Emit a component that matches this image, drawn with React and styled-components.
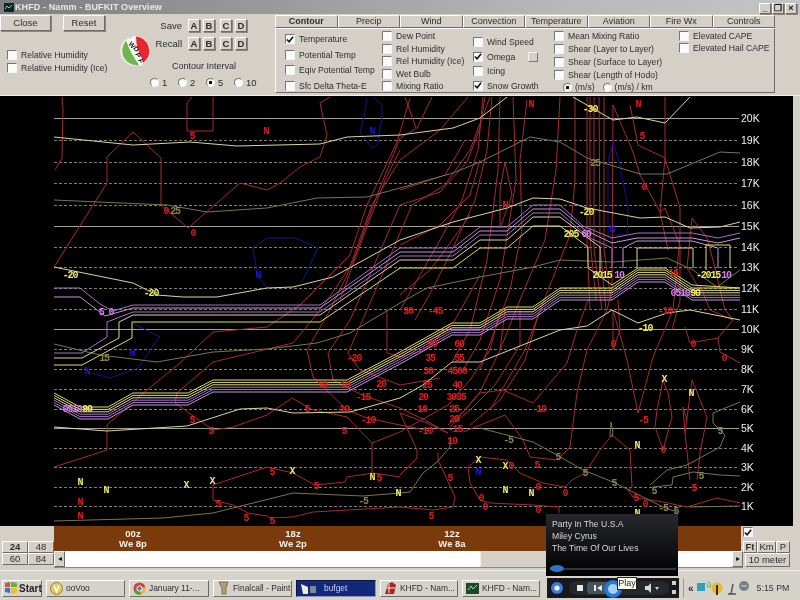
import React from 'react';
import styled, { createGlobalStyle, css } from 'styled-components';

const GlobalStyle = createGlobalStyle`
    html, body { margin: 0; padding: 0; background: #d4d0c8; }
    * { box-sizing: border-box; }
`;

const FACE = '#d4d0c8';
const raised = css`
    border: 1px solid;
    border-color: #fff #6e6c66 #6e6c66 #fff;
    box-shadow: 1px 1px 0 #8a8880;
`;

// chart data, all in page pixels (viewBox starts at y=96)
const GRID = [
    ['20K', 118, 1], ['19K', 140], ['18K', 162], ['17K', 183], ['16K', 205],
    ['15K', 226, 1], ['14K', 247], ['13K', 267], ['12K', 288], ['11K', 309],
    ['10K', 329, 1], ['9K', 349], ['8K', 369], ['7K', 389], ['6K', 409],
    ['5K', 428, 1], ['4K', 448], ['3K', 467], ['2K', 487], ['1K', 506],
];

const PALE = '#d8d89a';
const OLIVE = '#77774a';
const YEL = '#e0dc60';
const PUR = '#a870c8';
const LILAC = '#c498dc';
const RED = '#a62a30';
const BLUE = '#14148e';

const TEMP_LINES = [
    [PALE, '54,137 133,145 190,142 237,146 320,144 347,137 400,135 453,128 480,118 507,97'],
    [PALE, '573,97 613,120 637,117 665,123 690,97'],
    [OLIVE, '54,200 167,205 207,212 267,208 317,198 367,197 400,188 453,173 480,162 530,137 560,142 587,158 640,174 667,174 720,152 740,153'],
    [PALE, '54,267 133,283 157,295 183,297 217,297 267,288 293,287 333,277 400,240 453,222 507,208 533,198 560,199 587,208 640,218 665,217 690,228 720,227 740,222'],
    [OLIVE, '54,344 100,355 157,362 213,352 267,349 317,343 350,333 400,303 427,288 480,277 533,267 560,260 613,262 667,258 693,270 717,287 740,270'],
    [PALE, '54,427 107,431 187,426 240,409 267,408 293,413 350,412 400,398 423,385 452,362 480,362 510,350 560,330 587,326 612,310 638,323 667,313 690,310 740,320'],
    [OLIVE, '54,521 163,518 213,513 253,503 293,493 363,496 400,493 410,492 423,473 437,462 450,447 450,437'],
    [OLIVE, '480,428 533,442 557,455 583,470 613,482 633,492 663,507 677,512'],
    [OLIVE, '650,485 667,470 687,465 720,447 725,435 713,423 713,413 740,402'],
    [OLIVE, '653,487 672,485 673,477 693,472 720,475 740,476'],
    [OLIVE, '690,507 740,506'],
    [OLIVE, '610,437 611,422 613,432 612,437'],
];

const RED_LINES = [
    '62,97 63,108 62,158 55,170',
    '192,97 187,103 187,131 213,131 213,97',
    '54,267 107,183 107,157 133,132 161,158 161,205 188,228 240,183 267,190 280,183 300,167 320,157 327,135 320,103 330,97',
    '54,467 107,450 107,425 147,390 180,363 213,332 267,327 300,305 320,285 350,255 367,205 397,142 410,98',
    '213,362 177,393 175,403 213,430 233,427 267,415 292,398 313,410 347,417 372,443 400,432 448,405 470,380 490,350 500,310',
    '213,362 293,343 320,310 333,292 353,262 377,195 400,138 417,128 432,97',
    '307,350 330,310 347,275 372,205 400,160 440,130 468,97',
    '307,350 313,377 347,410 367,418 400,425 430,431',
    '328,353 333,380 362,395 400,408 425,420 448,433',
    '328,353 350,320 372,270 400,205 440,192 467,162 480,128 485,97',
    '348,353 360,370 400,385 440,378',
    '348,353 367,310 385,268 412,205 445,185 470,150 490,97',
    '387,310 387,353 400,357 425,350 455,320 480,275',
    '340,300 362,240 385,180 400,150',
    '372,443 372,473',
    '213,485 267,467 293,473 315,485 345,482 347,477 373,473 400,477',
    '213,485 213,500 233,505 248,513 267,516 270,518 293,517 313,512 400,507 433,510 453,507 455,497 438,460 438,452',
    '400,413 417,450 417,458 400,475',
    '468,467 480,457 507,460 520,473 543,483 565,487 572,480 585,473 600,450 612,435 630,450 632,487 628,490 633,497 663,502 687,507 717,498 740,503',
    '468,467 470,483 480,500 490,503 533,505 559,507 559,513',
    '400,413 427,423 448,433',
    '463,432 505,415 523,440 530,457 557,460 570,447 577,393 587,350 607,310 612,290 613,105 633,152 640,175 660,212 668,250',
    '450,427 480,393 503,390 533,403 567,363 577,330 588,300',
    '613,310 627,360 638,413 653,357 673,310 680,238 680,208 665,158 638,145 630,105',
    '613,310 613,350 620,330 618,300',
    '663,380 657,410 655,427 663,450 672,417 668,393 663,380',
    '692,380 707,417 700,453 697,480',
    '692,380 685,433 683,407 687,420',
    '690,480 685,433',
    '685,327 690,343 718,338 720,352 740,363',
    '718,338 733,320 710,310 700,285',
    '665,97 665,158 660,212 665,208 680,245 680,300 672,330',
    '692,218 707,238 715,268 725,310 733,320',
    '692,218 687,268 700,290',
    '505,162 512,195 500,228 500,190 505,162',
    '587,97 587,240 590,310',
    '590,97 590,240 596,300',
    '594,97 594,250 602,310',
    '599,97 600,245 606,310',
    '604,97 604,250 611,300',
    '500,97 498,170 487,260 470,330 452,362',
    '513,97 516,180 500,280 480,340 462,372',
    '527,100 520,160 522,230 510,290 480,370',
    '560,97 556,170 545,240 520,300 500,350',
    '575,97 575,180 570,235 548,290 525,350 490,410',
    '483,97 478,150 462,200 440,240 420,275 400,310',
    '492,97 487,150 475,200 452,250 432,290 415,320',
    '505,310 500,350 480,392 463,412 448,425',
    '520,310 520,345 495,385 470,410 455,422',
    '540,310 525,360 500,400 470,425',
    '416,128 405,97',
    '400,190 445,175 465,140',
    '400,245 440,225 470,195 480,160',
    '400,295 430,270 445,250 470,215',
];

const BLUE_LINES = [
    '373,97 382,105 382,117 377,145 372,148 360,133 365,112 367,98',
    '267,288 257,275 253,248 267,238 295,238 318,248 302,282',
    '87,372 110,378 138,368 155,343 160,337 132,323',
    '613,142 608,162 608,235 627,235 628,208 620,165 613,142',
];

// stability band, drawn top to bottom
const BAND_LINES = [
    [PUR, '54,288 80,288 100,304 113,311 133,305 320,305 400,248 453,248 480,227 507,227 533,205 560,205 583,226 612,238 638,233 692,233 718,238 740,233'],
    [LILAC, '54,297 80,297 105,316 133,308 320,308 400,252 453,252 480,231 507,231 533,209 560,209 585,230 612,243 637,238 692,238 718,243 740,238'],
    [PUR, '54,353 82,353 107,337 107,322 133,312 320,312 400,256 453,256 480,235 507,235 533,213 560,213 590,238 612,248 612,268'],
    [LILAC, '623,268 623,248 637,241 692,241 718,248 718,268'],
    [PALE, '54,358 82,358 119,338 119,322 133,315 320,315 400,260 453,260 480,240 507,240 533,217 560,217 600,247 600,272'],
    [YEL, '54,365 82,365 132,338 132,322 320,322 400,268 453,268 480,248 507,248 533,226 560,226 588,247 588,268 612,285 638,268 665,268 692,285 740,288'],
    [PALE, '637,268 637,248 693,248 693,268'],
    [YEL, '706,270 706,245 730,245 730,268'],
];

const lowerBand = (dy, color) => [
    color,
    [[54, 393], [80, 407], [108, 407], [133, 393], [188, 393], [213, 380], [347, 380], [400, 352], [452, 323], [480, 323], [507, 307], [533, 307], [560, 288], [612, 288], [638, 270], [665, 270], [692, 288], [740, 288]]
        .map(([x, y]) => `${x},${y + dy}`).join(' '),
];
const LOWER = [[0, YEL], [2.4, YEL], [4.8, PALE], [7.2, PUR], [9.6, PUR], [12, LILAC]].map(([d, c]) => lowerBand(d, c));

const R = '#e01c1c';
const Y = '#f0ec60';
const O = '#88864e';
const B = '#1c1cc8';
const P = '#d87ce8';

const LABELS = [
    ['N', 266, 131, R], ['5', 192, 136, R], ['0', 166, 211, R], ['25', 175, 211, O], ['0', 193, 233, R],
    ['N', 531, 104, R], ['N', 638, 104, R], ['5', 642, 136, R], ['0', 644, 187, R], ['N', 505, 205, R],
    ['16', 673, 273, R], ['-10', 665, 311, R], ['30', 408, 311, R], ['-45', 435, 311, R],
    ['0', 613, 344, R], ['0', 693, 344, R], ['0', 724, 358, R], ['0', 663, 450, R],
    ['-20', 354, 358, R], ['20', 381, 384, R], ['-15', 363, 397, R], ['10', 322, 385, R], ['10', 345, 385, R],
    ['10', 344, 409, R], ['-10', 368, 420, R], ['5', 307, 409, R], ['5', 344, 431, R], ['5', 192, 420, R], ['5', 211, 431, R],
    ['90', 432, 344, R], ['60', 459, 344, R], ['35', 430, 358, R], ['55', 459, 358, R], ['30', 428, 371, R], ['4560', 457, 371, R],
    ['25', 427, 385, R], ['40', 457, 385, R], ['20', 423, 397, R], ['3035', 456, 397, R], ['16', 422, 409, R], ['25', 454, 409, R],
    ['20', 454, 419, R], ['-10', 425, 431, R], ['-15', 455, 429, R], ['10', 452, 441, R], ['10', 541, 409, R], ['-5', 643, 420, R],
    ['5', 272, 472, R], ['5', 316, 486, R], ['5', 379, 478, R], ['5', 218, 504, R], ['5', 246, 518, R], ['5', 272, 521, R],
    ['N', 80, 502, R], ['N', 80, 516, R], ['5', 450, 478, R], ['0', 511, 466, R], ['5', 537, 465, R], ['0', 538, 487, R],
    ['0', 565, 493, R], ['0', 481, 498, R], ['0', 485, 507, R], ['0', 538, 510, R], ['5', 431, 516, R], ['5', 694, 488, R],
    ['0', 645, 504, R], ['5', 636, 498, R],
    ['N', 80, 482, Y], ['N', 106, 490, Y], ['X', 186, 485, Y], ['X', 212, 481, Y], ['X', 292, 471, Y], ['N', 372, 477, Y],
    ['N', 398, 493, Y], ['X', 478, 460, Y], ['X', 505, 466, Y], ['N', 505, 490, Y], ['N', 531, 493, Y], ['N', 637, 445, Y],
    ['X', 664, 379, Y], ['N', 691, 393, Y], ['N', 637, 513, Y],
    ['-10', 645, 328, Y], ['-20', 586, 212, Y], ['-30', 590, 109, Y], ['-20', 70, 275, Y], ['-20', 151, 293, Y],
    ['-5', 508, 440, O], ['5', 558, 457, O], ['5', 585, 473, O], ['5', 614, 483, O], ['5', 654, 491, O], ['-5', 663, 508, O],
    ['5', 676, 511, O], ['5', 720, 431, O], ['-5', 363, 501, O], ['5', 701, 476, O], ['15', 104, 358, O], ['25', 595, 163, O],
    ['N', 372, 131, B], ['N', 258, 275, B], ['N', 132, 353, B], ['N', 87, 371, B], ['N', 478, 472, B], ['N', 612, 229, B],
    ['5 0', 106, 312, P], ['205', 571, 234, Y], ['60', 586, 234, P], ['2015', 602, 275, Y], ['10', 619, 275, P],
    ['-2015', 708, 275, Y], ['10', 726, 275, P], ['0510', 680, 293, P], ['90', 695, 293, Y], ['0510', 72, 409, P], ['90', 87, 409, Y],
];

const TIMES = [['00z', 'We 8p', 133], ['18z', 'We 2p', 293], ['12z', 'We 8a', 452]];

const TABS = ['Contour', 'Precip', 'Wind', 'Convection', 'Temperature', 'Aviation', 'Fire Wx', 'Controls'];

const COLS = [
    { w: 97, pad: '4px 0 0', items: [['Temperature', true], ['Potential Temp'], ['Eqiv Potential Temp'], ['Sfc Delta Theta-E']] },
    { w: 91, pad: '1px 0 0', items: [['Dew Point'], ['Rel Humidity'], ['Rel Humidity (Ice)'], ['Wet Bulb'], ['Mixing Ratio']] },
    { w: 81, pad: '7px 0 0', items: [['Wind Speed'], ['Omega', true, true], ['Icing'], ['Snow Growth', true]] },
    { w: 125, pad: '1px 0 0', items: [['Mean Mixing Ratio'], ['Shear (Layer to Layer)'], ['Shear (Surface to Layer)'], ['Shear (Length of Hodo)']], radios: true },
    { w: 90, pad: '1px 0 38px', items: [['Elevated CAPE'], ['Elevated Hail CAPE']] },
];

function Check({ label, checked, extra }) {
    return (
        <CheckRow>
            <CheckBox>
                {checked && (
                    <svg width="9" height="9" viewBox="0 0 9 9">
                        <path d="M1 4.5 L3.5 7 L8 1.5" fill="none" stroke="#111" strokeWidth="1.8" />
                    </svg>
                )}
            </CheckBox>
            {label}
            {extra && <SwatchBtn />}
        </CheckRow>
    );
}

function Radio({ label, on, $w }) {
    return (
        <RadioRow $w={$w}>
            <RadioDot $on={on} />
            {label}
        </RadioRow>
    );
}

function Logo() {
    return (
        <LogoWrap>
            <svg width="32" height="32" viewBox="0 0 32 32">
                <circle cx="16" cy="16" r="15" fill="#f4e6e0" />
                <path d="M13 2 A14.5 14.5 0 0 0 20 30 Q12 14 13 2 Z" fill="#6cb84c" />
                <path d="M17 1.5 A14.5 14.5 0 0 1 25 27 Q17 14 17 1.5 Z" fill="#ec2430" />
                <path d="M7 5 Q12 3 15 2 Q16 16 24 29 L21 31 Q11 18 7 5 Z" fill="#fff" />
                <LogoText x="9" y="9" transform="rotate(50 9 9)">W</LogoText>
                <LogoText x="14" y="13" transform="rotate(60 14 13)">D</LogoText>
                <LogoText x="16" y="19" transform="rotate(65 16 19)">P</LogoText>
                <LogoText x="19" y="25" transform="rotate(70 19 25)">F</LogoText>
            </svg>
        </LogoWrap>
    );
}

function Chart() {
    return (
        <svg width="793" height="430" viewBox="0 96 793 430" style={{ display: 'block' }}>
            {GRID.map(([name, y, solid]) => (
                <line key={name} x1="54" x2="739" y1={y + 0.5} y2={y + 0.5}
                    stroke={solid ? '#a0a098' : '#7c7c78'} strokeDasharray={solid ? undefined : '3 2'} />
            ))}
            {RED_LINES.map((p, i) => <polyline key={i} points={p} fill="none" stroke={RED} />)}
            {BLUE_LINES.map((p, i) => <polyline key={i} points={p} fill="none" stroke={BLUE} />)}
            {TEMP_LINES.map(([c, p], i) => <polyline key={i} points={p} fill="none" stroke={c} />)}
            {BAND_LINES.map(([c, p], i) => <polyline key={i} points={p} fill="none" stroke={c} />)}
            {LOWER.map(([c, p], i) => <polyline key={i} points={p} fill="none" stroke={c} />)}
            {LABELS.map(([t, x, y, c], i) => <ChartLabel key={i} x={x} y={y} fill={c}>{t}</ChartLabel>)}
            {GRID.map(([name, y]) => <AxisLabel key={name} x="741" y={y + 4}>{name}</AxisLabel>)}
        </svg>
    );
}

function App() {
    return (
        <Page>
            <GlobalStyle />
            <TitleBar>
                <TitleIcon>
                    <svg width="10" height="9" viewBox="0 0 10 9">
                        <rect width="10" height="9" fill="#123" />
                        <path d="M1 6 L3 3 L5 5 L8 2" fill="none" stroke="#6e6" />
                    </svg>
                </TitleIcon>
                KHFD - Namm - BUFKIT Overview
                <WinButtons>
                    <WinBtn>_</WinBtn>
                    <WinBtn>❐</WinBtn>
                    <WinBtn>×</WinBtn>
                </WinButtons>
            </TitleBar>

            <ControlBar>
                <LeftPanel>
                    <ActionRow>
                        <PushBtn $w="51px">Close</PushBtn>
                        <PushBtn $w="42px">Reset</PushBtn>
                    </ActionRow>
                    <HumidityGroup>
                        <Check label="Relative Humidity" />
                        <Check label="Relative Humidity (Ice)" />
                    </HumidityGroup>
                    <Logo />
                    <MemoryGroup>
                        {['Save', 'Recall'].map(name => (
                            <MemoryRow key={name}>
                                <MemoryName>{name}</MemoryName>
                                {['A', 'B', 'C', 'D'].map(l => <LetterBtn key={l}>{l}</LetterBtn>)}
                            </MemoryRow>
                        ))}
                        <IntervalTitle>Contour Interval</IntervalTitle>
                        <IntervalRow>
                            <Radio label="1" $w={28} />
                            <Radio label="2" $w={28} />
                            <Radio label="5" $w={28} on />
                            <Radio label="10" $w={28} />
                        </IntervalRow>
                    </MemoryGroup>
                </LeftPanel>

                <TabArea>
                    <TabRow>
                        {TABS.map((t, i) => <Tab key={t} $active={i === 0}>{t}</Tab>)}
                    </TabRow>
                    <TabPanel>
                        {COLS.map((col, i) => (
                            <Column key={i} $w={col.w} $pad={col.pad}>
                                {col.items.map(([label, checked, extra]) => (
                                    <Check key={label} label={label} checked={checked} extra={extra} />
                                ))}
                                {col.radios && (
                                    <UnitsRow>
                                        <Radio label="(m/s)" on />
                                        <Radio label="(m/s) / km" />
                                    </UnitsRow>
                                )}
                            </Column>
                        ))}
                    </TabPanel>
                </TabArea>
            </ControlBar>

            <ChartRow>
                <Chart />
            </ChartRow>

            <BottomRow>
                <HourGrid>
                    <HourBtn $bold>24</HourBtn>
                    <HourBtn>48</HourBtn>
                    <HourBtn>60</HourBtn>
                    <HourBtn>84</HourBtn>
                </HourGrid>
                <TimeColumn>
                    <TimeBar>
                        {TIMES.map(([z, local, x]) => (
                            <TimeLabel key={z} $x={x}>{z}<br />{local}</TimeLabel>
                        ))}
                    </TimeBar>
                    <ScrollBar>
                        <ArrowBtn>◂</ArrowBtn>
                        <Track $w={415} />
                        <Thumb />
                        <Track $w={54} />
                        <ArrowBtn>▸</ArrowBtn>
                    </ScrollBar>
                </TimeColumn>
                <SideColumn>
                    <CheckBox><svg width="9" height="9" viewBox="0 0 9 9"><path d="M1 4.5 L3.5 7 L8 1.5" fill="none" stroke="#111" strokeWidth="1.8" /></svg></CheckBox>
                    <UnitTabs>
                        <UnitBtn $w={14} $bold>Ft</UnitBtn>
                        <UnitBtn $w={19}>Km</UnitBtn>
                        <UnitBtn $w={14}>P</UnitBtn>
                    </UnitTabs>
                    <MeterBtn>10 meter</MeterBtn>
                </SideColumn>
            </BottomRow>

            <Taskbar>
                <StartBtn>
                    <svg width="12" height="12" viewBox="0 0 12 12">
                        <path d="M0 1 L5 0 V5 H0Z" fill="#d8522a" />
                        <path d="M6 0 L12 1 V5 H6Z" fill="#6cae3a" />
                        <path d="M0 6 H5 V11 L0 10Z" fill="#3a70d0" />
                        <path d="M6 6 H12 V11 L6 12Z" fill="#eec030" />
                    </svg>
                    Start
                </StartBtn>
                <TaskBtn $w={79}>
                    <svg width="13" height="13" viewBox="0 0 13 13">
                        <circle cx="6.5" cy="6.5" r="6" fill="#e8c860" stroke="#a08030" />
                        <path d="M4 3.5 L6.5 9.5 L9 3.5" fill="none" stroke="#fff" strokeWidth="1.6" />
                    </svg>
                    ooVoo
                </TaskBtn>
                <TaskBtn $w={80}>
                    <svg width="13" height="13" viewBox="0 0 13 13">
                        <circle cx="6.5" cy="6.5" r="6" fill="#d84030" />
                        <path d="M6.5 6.5 L1 9 A6 6 0 0 0 8 12.5Z" fill="#50a040" />
                        <path d="M6.5 6.5 L8 12.5 A6 6 0 0 0 12.5 5Z" fill="#e8c030" />
                        <circle cx="6.5" cy="6.5" r="2.6" fill="#4878d8" stroke="#fff" />
                    </svg>
                    January 11-...
                </TaskBtn>
                <TaskBtn $w={79}>
                    <svg width="13" height="14" viewBox="0 0 13 14">
                        <path d="M2 1 L11 1 L9 7 V13 H5 V7Z" fill="#b0a078" stroke="#807050" />
                    </svg>
                    Finalcall - Paint
                </TaskBtn>
                <TaskBtn $w={80} $active>
                    <svg width="18" height="13" viewBox="0 0 18 13">
                        <path d="M1 2 L8 5 V12 H3Z" fill="#f0ece0" />
                        <path d="M10 4 H16 V11 H10Z" fill="#808898" />
                    </svg>
                    bufget
                </TaskBtn>
                <TaskBtn $w={78}>
                    <svg width="13" height="14" viewBox="0 0 13 14">
                        <path d="M1 13 L4 3 L8 1 L12 4 L10 13Z" fill="#a82820" />
                        <path d="M3 7 H11 M5 3 V12" stroke="#eee" />
                    </svg>
                    KHFD - Nam...
                </TaskBtn>
                <TaskBtn $w={78}>
                    <svg width="13" height="13" viewBox="0 0 13 13">
                        <rect x="0.5" y="1.5" width="12" height="10" fill="#204828" stroke="#284030" />
                        <path d="M2 8 L5 4 L7 7 L11 3" fill="none" stroke="#8e8" />
                    </svg>
                    KHFD - Nam...
                </TaskBtn>
                <MiniPlayer>
                    <svg width="132" height="20" viewBox="0 0 132 20">
                        <circle cx="10" cy="10" r="6" fill="#3a7ae0" />
                        <circle cx="10" cy="10" r="2.6" fill="#e8f0ff" />
                        <rect x="22" y="3" width="100" height="14" rx="7" fill="#24272c" />
                        <rect x="30" y="7" width="6" height="6" fill="#e8e8e8" />
                        <rect x="40" y="4" width="24" height="12" rx="2" fill="#48505a" />
                        <path d="M55 7 L50 10 L55 13Z M47 7 H49 V13 H47Z" fill="#e8e8e8" />
                        <circle cx="66" cy="11" r="9" fill="#2478d8" />
                        <circle cx="66" cy="11" r="5" fill="#a8d0f8" />
                        <path d="M98 8 L101 8 L104 5 V15 L101 12 H98Z" fill="#d8d8d8" />
                        <path d="M108 9 L112 9 L110 12Z" fill="#d8d8d8" />
                        <rect x="125" y="3" width="4" height="4" fill="#d0d0d0" />
                        <rect x="125" y="12" width="4" height="4" fill="#d0d0d0" />
                    </svg>
                </MiniPlayer>
                <Tray>
                    <TrayChevron>«</TrayChevron>
                    <svg width="54" height="16" viewBox="0 0 54 16">
                        <rect x="1" y="3" width="8" height="8" fill="#30a0c0" />
                        <path d="M10 3 Q13 5 12 8 M12 1 Q16 4 14 8" fill="none" stroke="#40c040" />
                        <circle cx="21" cy="8" r="5.5" fill="#e8b830" />
                        <rect x="20" y="5" width="2" height="10" fill="#303030" />
                        <path d="M37 4 L35 14 M32 14 H40" fill="none" stroke="#505050" strokeWidth="1.4" />
                        <circle cx="48" cy="6" r="5" fill="#7a8088" />
                        <path d="M45 6 H51" stroke="#d0d0d0" />
                    </svg>
                    <Clock>5:15 PM</Clock>
                </Tray>
            </Taskbar>

            <NowPlaying>
                <SongLine>Party In The U.S.A</SongLine>
                <SongLine>Miley Cyrus</SongLine>
                <SongLine>The Time Of Our Lives</SongLine>
                <Progress><ProgressKnob /></Progress>
            </NowPlaying>
            <PlayTip>Play</PlayTip>
        </Page>
    );
}

export default App;

// the reference is a soft jpeg, a touch of blur brings the picture close to it
const Page = styled.div`
    position: relative;
    width: 800px;
    height: 600px;
    overflow: hidden;
    display: flex;
    flex-direction: column;
    background: ${FACE};
    font-family: "Liberation Sans", Arial, sans-serif;
    font-size: 8.6px;
    color: #2c2c2c;
    filter: blur(0.35px);
`;

const TitleBar = styled.div`
    position: relative;
    height: 14px;
    display: flex;
    align-items: center;
    gap: 1px;
    padding-left: 4px;
    background: linear-gradient(to right, #7e7e7e, #b8b8b8 70%, #c4c4c4);
    color: #e8e8e8;
    font-size: 9px;
    font-weight: bold;
    letter-spacing: 0.1px;
`;

const TitleIcon = styled.span`
    display: flex;
`;

const WinButtons = styled.div`
    margin-left: auto;
    margin-right: 3px;
    margin-top: 3px;
    display: flex;
    gap: 1px;
`;

const WinBtn = styled.div`
    width: 12px;
    height: 11px;
    ${raised}
    background: ${FACE};
    color: #111;
    font-size: 9px;
    line-height: 8px;
    text-align: center;
`;

const ControlBar = styled.div`
    height: 82px;
    display: flex;
    border-bottom: 1px solid #eee;
`;

const LeftPanel = styled.div`
    position: relative;
    width: 275px;
`;

const ActionRow = styled.div`
    display: flex;
    gap: 12px;
    padding-top: 1px;
`;

const PushBtn = styled.div`
    width: ${p => p.$w};
    height: 16px;
    ${raised}
    background: ${FACE};
    font-size: 9.5px;
    line-height: 13px;
    text-align: center;
`;

const HumidityGroup = styled.div`
    display: flex;
    flex-direction: column;
    gap: 1px;
    padding: 18px 0 0 7px;
`;

const LogoWrap = styled.div`
    position: absolute;
    left: 119px;
    top: 21px;
    width: 32px;
    height: 32px;
`;

const LogoText = styled.text`
    font: bold 7px "Liberation Sans", sans-serif;
    fill: #111;
`;

const MemoryGroup = styled.div`
    position: absolute;
    left: 150px;
    top: 3px;
    width: 110px;
    display: flex;
    flex-direction: column;
    align-items: flex-end;
`;

const MemoryRow = styled.div`
    display: flex;
    align-items: center;
    gap: 3px;
    height: 17px;
    margin-bottom: 1px;
    padding-right: 13px;
`;

const MemoryName = styled.span`
    margin-right: 3px;
    font-size: 9.5px;
`;

const LetterBtn = styled.div`
    width: 12px;
    height: 13px;
    ${raised}
    background: ${FACE};
    font-size: 9.5px;
    font-weight: bold;
    line-height: 11px;
    text-align: center;
    &:nth-child(4) { margin-left: 2px; }
`;

const IntervalTitle = styled.div`
    align-self: center;
    margin-left: -2px;
    padding-top: 8px;
    height: 19px;
    font-size: 9px;
`;

const IntervalRow = styled.div`
    display: flex;
    align-self: flex-start;
    margin: 5px 0 0 0;
    font-size: 9.5px;
`;

const CheckRow = styled.div`
    display: flex;
    align-items: center;
    gap: 4px;
    height: 12px;
    white-space: nowrap;
`;

const CheckBox = styled.div`
    flex: none;
    width: 10px;
    height: 10px;
    display: flex;
    align-items: center;
    justify-content: center;
    background: #fafafa;
    border: 1px solid;
    border-color: #77756e #f4f4f4 #f4f4f4 #77756e;
`;

const SwatchBtn = styled.div`
    width: 10px;
    height: 10px;
    margin-left: 9px;
    border: 1px solid;
    border-color: #f4f4f4 #77756e #77756e #f4f4f4;
`;

const RadioRow = styled.div`
    ${p => p.$w && `width: ${p.$w}px;`}
    display: flex;
    align-items: center;
    gap: 3px;
    white-space: nowrap;
`;

const RadioDot = styled.div`
    width: 9px;
    height: 9px;
    border-radius: 50%;
    border: 1px solid;
    border-color: #77756e #f4f4f4 #f4f4f4 #77756e;
    background: ${p => p.$on ? 'radial-gradient(circle, #111 0 1.6px, #fafafa 2px)' : '#fafafa'};
`;

const TabArea = styled.div`
    width: 500px;
    display: flex;
    flex-direction: column;
    padding-top: 1px;
`;

const TabRow = styled.div`
    height: 13px;
    display: grid;
    grid-template-columns: repeat(8, 1fr);
`;

const Tab = styled.div`
    ${raised}
    box-shadow: none;
    background: ${FACE};
    text-align: center;
    line-height: 11px;
    font-size: 9px;
    font-weight: ${p => p.$active ? 'bold' : 'normal'};
`;

const TabPanel = styled.div`
    height: 65px;
    display: flex;
    padding-left: 9px;
    border: 1px solid;
    border-color: #fff #6e6c66 #6e6c66 #fff;
`;

const Column = styled.div`
    flex: none;
    width: ${p => p.$w}px;
    display: flex;
    flex-direction: column;
    justify-content: space-between;
    padding: ${p => p.$pad};
`;

const UnitsRow = styled.div`
    display: flex;
    gap: 8px;
    padding-left: 9px;
`;

const ChartRow = styled.div`
    height: 430px;
    background: ${FACE};
    display: flex;
    & > svg { background: #000; }
`;

const BottomRow = styled.div`
    height: 44px;
    display: flex;
`;

const HourGrid = styled.div`
    width: 54px;
    height: 24px;
    margin-top: 15px;
    padding-left: 2px;
    display: grid;
    grid-template-columns: 1fr 1fr;
    grid-template-rows: 1fr 1fr;
`;

const HourBtn = styled.div`
    ${raised}
    box-shadow: none;
    background: ${FACE};
    text-align: center;
    line-height: 10px;
    font-size: 9.5px;
    font-weight: ${p => p.$bold ? 'bold' : 'normal'};
`;

const TimeColumn = styled.div`
    width: 687px;
    display: flex;
    flex-direction: column;
`;

const TimeBar = styled.div`
    position: relative;
    height: 25px;
    background: #7a3a0c;
`;

const TimeLabel = styled.div`
    position: absolute;
    top: 3px;
    left: ${p => p.$x - 54 - 25}px;
    width: 50px;
    text-align: center;
    color: #f2f2f2;
    font-size: 9.5px;
    font-weight: bold;
    line-height: 10px;
`;

const ScrollBar = styled.div`
    height: 17px;
    margin-right: -2px;
    display: flex;
    border-bottom: 1px solid #8a8880;
`;

const ArrowBtn = styled.div`
    width: 11px;
    ${raised}
    box-shadow: none;
    background: ${FACE};
    font-size: 8px;
    line-height: 14px;
    text-align: center;
    color: #111;
`;

const Track = styled.div`
    width: ${p => p.$w}px;
    background: #fff;
`;

const Thumb = styled.div`
    flex: 1;
    background: ${FACE};
    border-left: 1px solid #eee;
`;

const SideColumn = styled.div`
    width: 52px;
    padding: 1px 0 0 2px;
    display: flex;
    flex-direction: column;
`;

const UnitTabs = styled.div`
    display: flex;
    margin-top: 4px;
`;

const UnitBtn = styled.div`
    width: ${p => p.$w}px;
    height: 12px;
    ${raised}
    box-shadow: none;
    text-align: center;
    line-height: 10px;
    font-size: 9.5px;
    font-weight: ${p => p.$bold ? 'bold' : 'normal'};
`;

const MeterBtn = styled.div`
    width: 45px;
    height: 14px;
    margin-left: 2px;
    ${raised}
    box-shadow: none;
    text-align: center;
    line-height: 12px;
    font-size: 9.5px;
`;

const Taskbar = styled.div`
    height: 30px;
    display: flex;
    align-items: center;
    gap: 4px;
    padding: 8px 0 3px 2px;
    background: #d6d3cb;
    border-top: 1px solid #f2f0ea;
    & svg { flex: none; }
`;

const StartBtn = styled.div`
    width: 40px;
    height: 17px;
    display: flex;
    align-items: center;
    gap: 2px;
    padding-left: 2px;
    ${raised}
    box-shadow: none;
    font-weight: bold;
    font-size: 10px;
    color: #222;
`;

const TaskBtn = styled.div`
    flex: none;
    width: ${p => p.$w}px;
    height: 17px;
    display: flex;
    align-items: center;
    gap: 3px;
    padding-left: 3px;
    overflow: hidden;
    white-space: nowrap;
    ${raised}
    box-shadow: none;
    font-size: 8.4px;
    ${p => p.$active && css`
        background: #13287a;
        color: #c8d0f0;
        gap: 6px;
        border-color: #0a1440 #9098b8 #9098b8 #0a1440;
    `}
`;

const MiniPlayer = styled.div`
    flex: none;
    width: 132px;
    height: 20px;
    margin-left: 3px;
    background: #16181c;
    display: flex;
`;

const Tray = styled.div`
    flex: 1;
    height: 20px;
    display: flex;
    align-items: center;
    padding-left: 4px;
    border-left: 1px solid #9a9890;
    white-space: nowrap;
`;

const TrayChevron = styled.span`
    font-weight: bold;
    font-size: 10px;
    margin-right: 2px;
`;

const Clock = styled.span`
    margin-left: 7px;
    font-size: 8.8px;
    color: #333;
`;

const NowPlaying = styled.div`
    position: absolute;
    left: 546px;
    top: 514px;
    width: 132px;
    height: 62px;
    padding: 4px 6px 0;
    background: linear-gradient(to bottom, #26282c, #0c0c0e 70%, #000);
    color: #d8d8d8;
    font-size: 8.6px;
`;

const SongLine = styled.div`
    height: 12px;
    line-height: 12px;
`;

const Progress = styled.div`
    position: absolute;
    left: 4px;
    right: 2px;
    top: 54px;
    height: 2px;
    background: #34383c;
`;

const ProgressKnob = styled.div`
    position: absolute;
    left: 0;
    top: -3px;
    width: 14px;
    height: 7px;
    border-radius: 50%;
    background: #2c74c8;
`;

const PlayTip = styled.div`
    position: absolute;
    left: 617px;
    top: 577px;
    width: 20px;
    height: 13px;
    background: #fffff0;
    border: 1px solid #222;
    font-size: 9px;
    line-height: 11px;
    text-align: center;
    color: #222;
`;

const ChartLabel = styled.text`
    font: bold 10px "Liberation Mono", "DejaVu Sans Mono", monospace;
    letter-spacing: -1.2px;
    text-anchor: middle;
    dominant-baseline: middle;
`;

const AxisLabel = styled.text`
    font: 10.5px "Liberation Sans", sans-serif;
    fill: #f0f0f0;
`;
